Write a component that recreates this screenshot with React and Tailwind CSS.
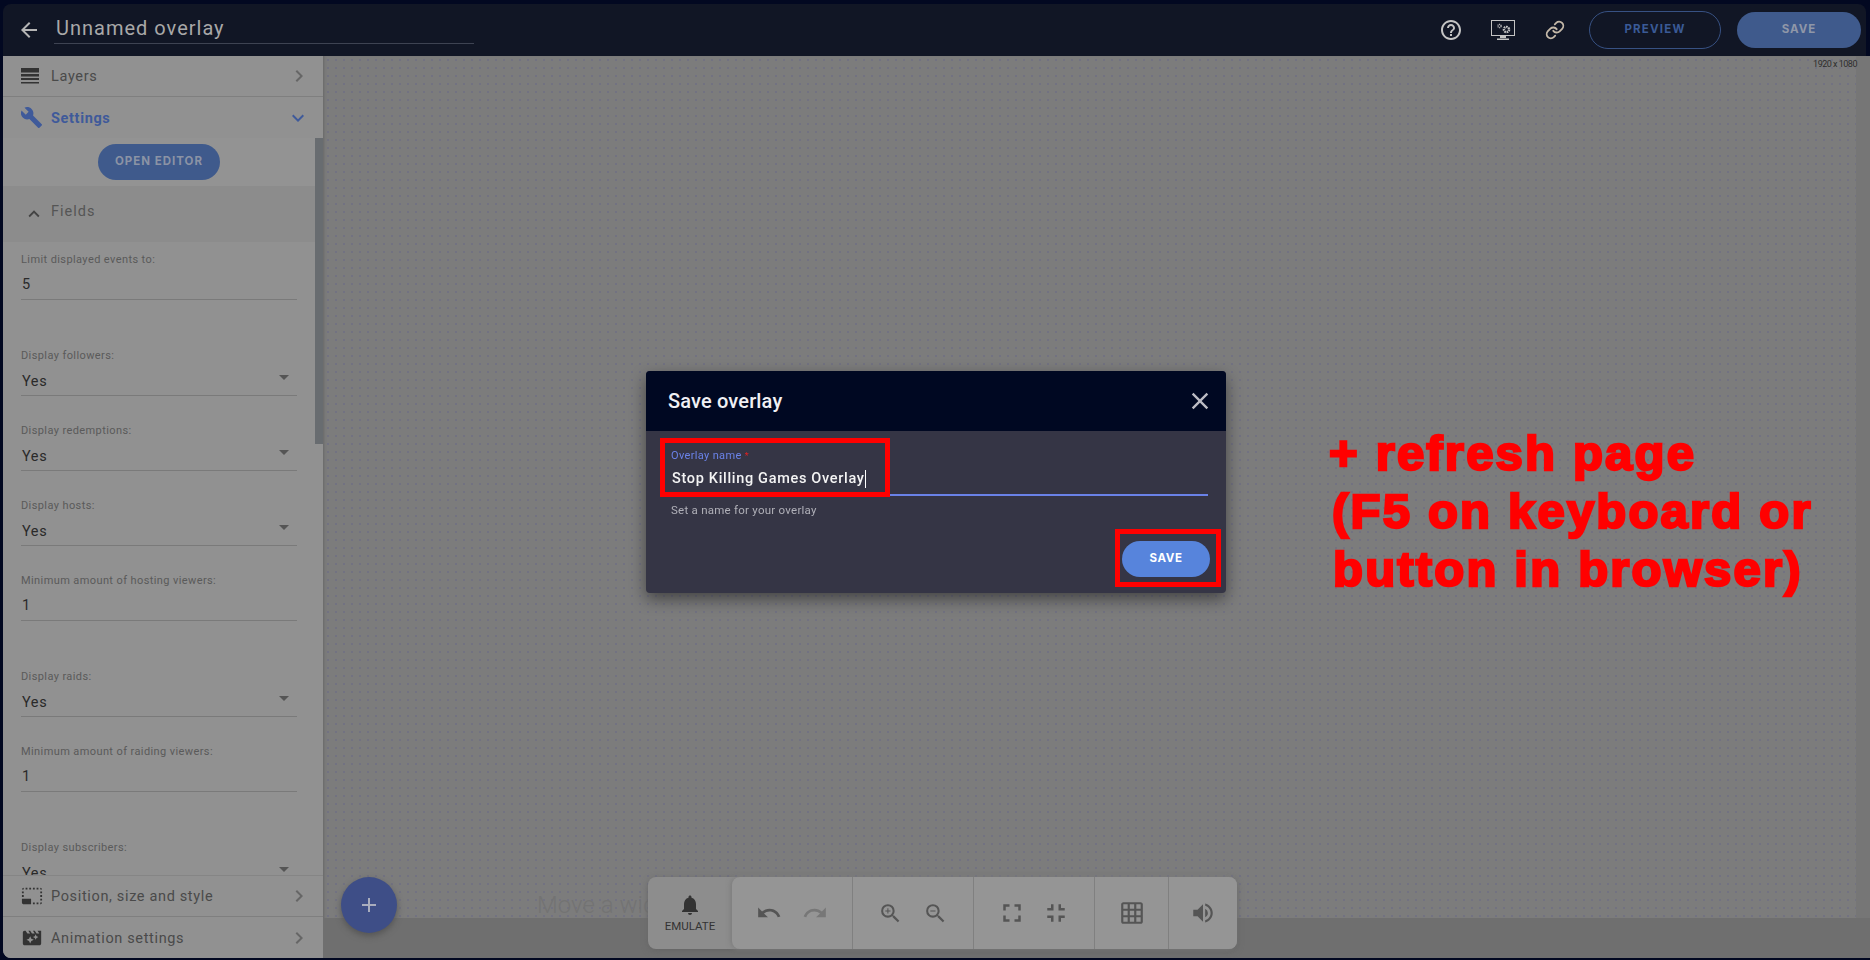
import React from 'react';
import {
  MdArrowBack, MdHelpOutline, MdChevronRight, MdExpandMore, MdExpandLess, MdBuild, MdClose, MdAdd,
  MdPhotoSizeSelectSmall, MdMovieFilter, MdNotifications, MdUndo, MdRedo, MdZoomIn, MdZoomOut,
  MdFullscreen, MdFullscreenExit, MdGridOn, MdVolumeUp,
} from 'react-icons/md';
import { Link as LinkIcon } from 'lucide-react';

const ROBOTO = 'font-[Roboto,"Noto_Sans",sans-serif]';

const fields = [
  { label: 'Limit displayed events to:', value: '5', h: 'h-[96px]' },
  { label: 'Display followers:', value: 'Yes', select: true },
  { label: 'Display redemptions:', value: 'Yes', select: true },
  { label: 'Display hosts:', value: 'Yes', select: true },
  { label: 'Minimum amount of hosting viewers:', value: '1', h: 'h-[96px]' },
  { label: 'Display raids:', value: 'Yes', select: true },
  { label: 'Minimum amount of raiding viewers:', value: '1', h: 'h-[96px]' },
  { label: 'Display subscribers:', value: 'Yes', select: true },
];

function LayersIcon() {
  return (
    <svg width="18" height="16" viewBox="0 0 18 16" className="text-[#333]" fill="currentColor">
      <rect x="0" y="0" width="18" height="4.5" />
      <rect x="0" y="6" width="18" height="2.5" />
      <rect x="0" y="10" width="18" height="2" />
      <rect x="0" y="14" width="18" height="1.5" />
    </svg>
  );
}

function MonitorIcon() {
  return (
    <svg width="24" height="21" viewBox="0 0 24 21" fill="none" className="text-[#c4c4c4]">
      <rect x="0.5" y="0.5" width="23" height="15" stroke="currentColor" />
      <circle cx="8.5" cy="6" r="1.6" stroke="currentColor" strokeWidth="1.4" strokeDasharray="1 0.6" />
      <circle cx="15.5" cy="9.5" r="2.6" stroke="currentColor" strokeWidth="2.4" strokeDasharray="1.6 0.7" />
      <rect x="9" y="16" width="6" height="2" fill="currentColor" />
      <rect x="6" y="18.5" width="12" height="1.5" fill="currentColor" />
    </svg>
  );
}

function SideRow({ icon, label, active, border }) {
  return (
    <div className={`h-[41px] shrink-0 flex items-center pl-[19px] pr-[18px] bg-[#919191] ${border ? 'border-b border-[#7f7f7f]' : ''}`}>
      <div className="w-[30px] -ml-[1px] flex items-center">{icon}</div>
      <span className={`text-[14.5px] tracking-[0.65px] mt-[2px] flex-1 ${active ? 'font-bold text-[#3f5a9a]' : 'text-[#4a4a4a]'}`}>{label}</span>
      {active ? <MdExpandMore size={24} className="text-[#3f5a9a] -mr-[5px]" /> : <MdChevronRight size={24} className="text-[#666] -mr-[6px]" />}
    </div>
  );
}

function Field({ field }) {
  return (
    <div className={`${field.h || 'h-[75px]'} px-[18px]`}>
      <div className="w-[276px]">
        <div className="h-[22px] text-[11px] tracking-[0.4px] leading-[22px] text-[#5a5a5a]">{field.label}</div>
        <div className="h-[29px] pl-[1px] flex items-center justify-between border-b border-[#7a7a7a] text-[14.5px] tracking-[0.6px] text-[#2a2a2a]">
          <span className={field.select ? 'mt-[2px]' : ''}>{field.value}</span>
          {field.select && <span className="mr-[8px] mb-[8px] w-0 h-0 border-x-[5px] border-x-transparent border-t-[5px] border-t-[#555]" />}
        </div>
      </div>
    </div>
  );
}

function ToolGroup({ children, w, last }) {
  return (
    <div className={`${w} h-full flex items-center justify-center gap-[20px] text-[#555] ${last ? '' : 'border-r border-[#808080]'}`}>
      {children}
    </div>
  );
}

export default function App() {
  return (
    <div className={`h-screen w-full overflow-hidden flex flex-col bg-[#020821] pt-1 pl-[3px] pb-[2px] ${ROBOTO}`}>
      {/* Top bar */}
      <header className="h-[52px] shrink-0 mr-1 rounded-t-lg bg-[#111625] flex items-center pl-[14px] pr-[5px]">
        <MdArrowBack size={24} className="text-[#b5b5b5] mr-[13px]" />
        <div className="w-[420px] h-[34px] -mt-[6px] pl-[2px] border-b border-[#3e4352] text-[20px] leading-[36px] tracking-[1px] text-[#a8a8a8]">Unnamed overlay</div>
        <div className="flex-1" />
        <MdHelpOutline size={24} className="text-[#c4c4c4] mr-[2px]" />
        <div className="ml-[26px]"><MonitorIcon /></div>
        <LinkIcon size={20} strokeWidth={2.2} className="ml-[30px] text-[#c4b8a8]" />
        <button className="ml-[24px] w-[132px] h-[38px] rounded-full border border-[#375183] text-[11.5px] font-bold tracking-[1.2px] text-[#3a5a96] font-[Inter,sans-serif]">PREVIEW</button>
        <button className="ml-[16px] w-[124px] h-[36px] rounded-full bg-[#3f5a8c] text-[11.5px] font-bold tracking-[1px] text-[#8f97a8] font-[Inter,sans-serif]">SAVE</button>
      </header>

      <div className="flex-1 min-h-0 flex">
        {/* Left panel */}
        <aside className="w-[320px] shrink-0 flex flex-col bg-[#919191] rounded-bl-lg overflow-hidden">
          <SideRow icon={<LayersIcon />} label="Layers" border />
          <SideRow icon={<MdBuild size={23} className="text-[#3f5a9a] -ml-[1px]" />} label="Settings" active />
          <div className="flex-1 min-h-0 flex overflow-hidden">
            <div className="flex-1 min-w-0">
              <div className="h-[48px] flex justify-center pt-[6px] bg-[#939393]">
                <button className="w-[122px] h-[36px] rounded-full bg-[#3f5a8c] text-[11.5px] font-bold tracking-[1px] text-[#8b93a5] font-[Inter,sans-serif]">OPEN EDITOR</button>
              </div>
              <div className="h-[56px] flex items-center pl-[20px] bg-[#8c8c8c] text-[#555]">
                <MdExpandLess size={22} className="text-[#444] mr-[6px]" />
                <span className="text-[14.5px] tracking-[1px] -mt-[4px]">Fields</span>
              </div>
              <div className="pt-[7px]">
                {fields.map((f) => <Field key={f.label} field={f} />)}
              </div>
            </div>
            <div className="w-[8px] shrink-0">
              <div className="h-[306px] bg-[#686c70]" />
            </div>
          </div>
          <div className="border-t border-[#858585]">
            <SideRow icon={<MdPhotoSizeSelectSmall size={22} className="text-[#333]" />} label="Position, size and style" border />
          </div>
          <SideRow icon={<MdMovieFilter size={22} className="text-[#333]" />} label="Animation settings" />
        </aside>

        {/* Canvas */}
        <main className="relative flex-1 min-w-0 flex flex-col bg-[#7c7c7c] shadow-[inset_3px_0_3px_-2px_#666]">
          <div className="flex-1 flex">
            <div className="flex-1 bg-[radial-gradient(circle,#727281_1px,transparent_1.1px)] bg-[size:8px_8px] bg-[position:1px_0px]" />
            <div className="w-[14px] bg-[#767676]" />
          </div>
          <div className="h-[40px] bg-[#6f6f6f]" />

          <span className="absolute top-[2px] right-[13px] text-[9px] tracking-[-0.5px] text-[#2e2e2e]">1920 x 1080</span>
          <span className="absolute left-[214px] top-[833px] text-[24px] font-light leading-[32px] text-[#737373]">Move a widget</span>

          <button className="absolute left-[18px] top-[821px] w-[56px] h-[56px] rounded-full bg-[#3e4e87] shadow-[0_3px_6px_#555] flex items-center justify-center">
            <MdAdd size={24} className="text-[#a9adbd]" />
          </button>

          {/* Bottom toolbar */}
          <div className="absolute left-[325px] top-[821px] w-[589px] h-[72px] flex rounded-lg bg-[#8d8d8d] shadow-[0_2px_6px_#666]">
            <div className="w-[84px] flex flex-col items-center justify-center text-[#333]">
              <MdNotifications size={24} />
              <span className="text-[11.5px] leading-[16px] mt-[1px]">EMULATE</span>
            </div>
            <div className="flex-1 flex rounded-lg bg-[#959595] shadow-[-2px_0_4px_#7f7f7f]">
              <ToolGroup w="w-[121px]">
                <MdUndo size={26} className="text-[#555]" />
                <MdRedo size={26} className="text-[#777]" />
              </ToolGroup>
              <ToolGroup w="w-[121px]">
                <MdZoomIn size={25} />
                <MdZoomOut size={25} />
              </ToolGroup>
              <ToolGroup w="w-[121px]">
                <span className="flex gap-[14px]">
                  <MdFullscreen size={30} />
                  <MdFullscreenExit size={30} />
                </span>
              </ToolGroup>
              <ToolGroup w="w-[74px]">
                <MdGridOn size={26} />
              </ToolGroup>
              <ToolGroup w="w-[67px]" last>
                <MdVolumeUp size={26} />
              </ToolGroup>
            </div>
          </div>

          {/* Annotation */}
          <div className="absolute left-[1002px] top-[368px] w-[520px] font-['Liberation_Sans',sans-serif] font-bold text-[49px] leading-[58px] text-[#ff0000] [-webkit-text-stroke:2.5px_#ff0000] tracking-[2.2px] whitespace-pre">
            <div className="pl-[4px]">+ refresh page</div>
            <div className="pl-[7px]">(F5 on keyboard or</div>
            <div className="pl-[8px]">button in browser)</div>
          </div>
        </main>
      </div>

      {/* Save dialog */}
      <div className="fixed inset-0 flex items-center justify-center pt-[4px] pl-[2px]">
        <div className="relative w-[580px] h-[222px] rounded-[4px] overflow-visible bg-[#353545] shadow-[0_6px_16px_rgba(0,0,0,0.45)]">
          <div className="h-[60px] rounded-t-[4px] bg-[#000822] flex items-center justify-between pl-[22px] pr-[12px]">
            <span className="text-[20px] font-medium tracking-[0.15px] text-[#f0f0f4]">Save overlay</span>
            <MdClose size={28} className="text-[#bcbcc4]" />
          </div>
          <div className="pt-[18px] px-[18px] pl-[25px]">
            <div className="text-[11px] leading-[14px] text-[#6a82e8] tracking-[0.35px]">Overlay name <span className="text-[#e02020] align-top text-[9px]">*</span></div>
            <div className="h-[32px] mt-[1px] border-b-2 border-[#6a82e8] flex items-center pl-[1px]">
              <span className="text-[14.5px] font-medium tracking-[0.68px] text-[#f4f4f4] border-r border-white leading-[18px]">Stop Killing Games Overlay</span>
            </div>
            <div className="mt-[7px] text-[11.5px] leading-[14px] tracking-[0.25px] text-[#b0b0b8]">Set a name for your overlay</div>
          </div>
          <button className="absolute right-[16px] bottom-[16px] w-[88px] h-[36px] rounded-full bg-[#5784dc] text-[11.5px] font-bold tracking-[0.6px] text-white font-[Inter,sans-serif]">SAVE</button>

          {/* Red marker boxes */}
          <div className="absolute left-[14px] top-[67px] w-[230px] h-[59px] border-[5px] border-[#ff0000]" />
          <div className="absolute left-[469px] top-[158px] w-[106px] h-[58px] border-[5px] border-[#ff0000]" />
        </div>
      </div>
    </div>
  );
}
